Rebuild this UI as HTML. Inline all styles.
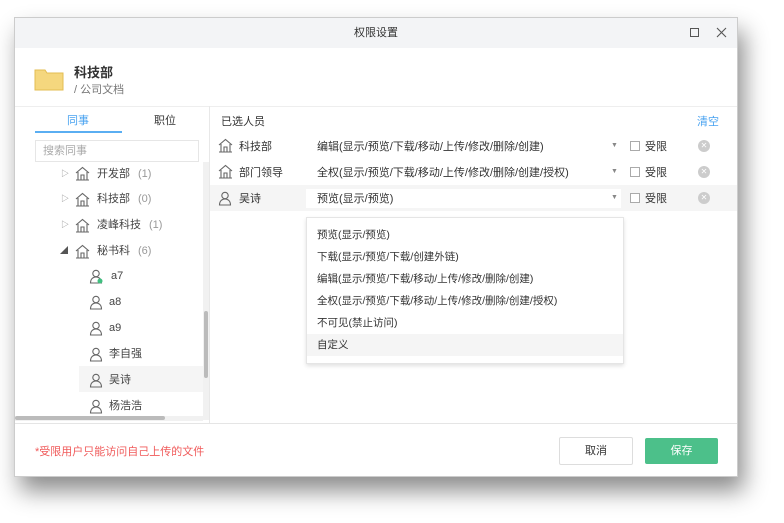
<!DOCTYPE html>
<html><head><meta charset="utf-8"><style>
*{box-sizing:border-box;margin:0;padding:0}
body{width:784px;height:523px;background:#fff;font-family:"Liberation Sans","Noto Sans CJK SC",sans-serif;font-size:11px;color:#333;position:relative;overflow:hidden}
.dlg{position:absolute;left:14px;top:17px;width:724px;height:460px;background:#fff;box-shadow:6px 14px 22px rgba(0,0,0,.45);border:1px solid #ccc}
.abs{position:absolute}
.title{left:0;top:0;width:100%;height:30px;background:#f3f4f6;text-align:center;line-height:30px;font-size:11px;color:#333}
.tree div.it{position:absolute;height:26px;line-height:26px;font-size:11px;color:#444}
.cnt{color:#999;margin-left:8px}
.dd div{height:22px;line-height:22px;padding-left:10px;font-size:10.5px;color:#333}
.arr{position:absolute;left:596px;font-size:7px;color:#888}
</style></head><body>
<div class="dlg">
 <div class="abs title">权限设置</div>
 <div class="abs" style="left:675px;top:10px;width:9px;height:9px;border:1px solid #555"></div>
 <svg class="abs" style="left:701px;top:9px" width="11" height="11"><path d="M1 1l9 9M10 1l-9 9" stroke="#555" stroke-width="1.1"/></svg>
 <svg class="abs" style="left:19px;top:49px" width="30" height="24" viewBox="0 0 30 24"><path d="M1 3h10l2 3h16v17H1z" fill="#f5d77e" stroke="#e3bc52"/></svg>
 <div class="abs" style="left:59px;top:44px;font-size:13px;font-weight:bold;color:#333">科技部</div>
 <div class="abs" style="left:59px;top:63px;font-size:11px;color:#777">/ 公司文档</div>
 <div class="abs" style="left:0;top:88px;width:722px;height:1px;background:#eee"></div>
 <div class="abs" style="left:52px;top:94px;color:#4aa3f0;font-size:11px">同事</div>
 <div class="abs" style="left:139px;top:94px;color:#333;font-size:11px">职位</div>
 <div class="abs" style="left:20px;top:113px;width:87px;height:2px;background:#5aaef2"></div>
 <div class="abs" style="left:20px;top:122px;width:164px;height:22px;border:1px solid #e6e6e6;color:#aaa;line-height:20px;padding-left:7px">搜索同事</div>
 <div class="abs" style="left:194px;top:88px;width:1px;height:317px;background:#e8e8e8"></div>
 <div class="abs" style="left:188px;top:144px;width:6px;height:258px;background:#f1f1f1"></div>
 <div class="abs" style="left:189px;top:293px;width:4px;height:67px;background:#bbb;border-radius:2px"></div>
 <div class="abs" style="left:0;top:398px;width:188px;height:5px;background:#f1f1f1"></div>
 <div class="abs" style="left:0;top:398px;width:150px;height:4px;background:#bbb;border-radius:2px"></div>
 <div class="abs" style="left:64px;top:348px;width:124px;height:26px;background:#f5f5f5"></div>
 <div class="tree">
  <svg width="0" height="0" style="position:absolute"><defs>
   <g id="h"><path d="M1 7L7.5 1.5 14 7M3 6v8h9V6M1 14h13M6 14V9h3v5" fill="none" stroke="#666" stroke-width="1.1"/></g>
   <g id="p"><circle cx="7" cy="4.5" r="3.2" fill="none" stroke="#666" stroke-width="1.1"/><path d="M1.5 14c0-4 2.5-6 5.5-6s5.5 2 5.5 6z" fill="none" stroke="#666" stroke-width="1.1"/></g>
  </defs></svg>
  <div class="it" style="left:46px;top:143px;color:#888;font-size:8px">▷</div>
  <svg class="abs" style="left:60px;top:148px" width="15" height="15"><use href="#h"/></svg>
  <div class="it" style="left:82px;top:143px">开发部<span class="cnt">(1)</span></div>
  <div class="it" style="left:46px;top:168px;color:#888;font-size:8px">▷</div>
  <svg class="abs" style="left:60px;top:174px" width="15" height="15"><use href="#h"/></svg>
  <div class="it" style="left:82px;top:168px">科技部<span class="cnt">(0)</span></div>
  <div class="it" style="left:46px;top:194px;color:#888;font-size:8px">▷</div>
  <svg class="abs" style="left:60px;top:200px" width="15" height="15"><use href="#h"/></svg>
  <div class="it" style="left:82px;top:194px">凌峰科技<span class="cnt">(1)</span></div>
  <div class="it" style="left:45px;top:220px;color:#555;font-size:8px">◢</div>
  <svg class="abs" style="left:60px;top:226px" width="15" height="15"><use href="#h"/></svg>
  <div class="it" style="left:82px;top:220px">秘书科<span class="cnt">(6)</span></div>
  <svg class="abs" style="left:74px;top:251px" width="14" height="15"><use href="#p"/><circle cx="11" cy="12" r="2.5" fill="#3fbf7f"/></svg>
  <div class="it" style="left:96px;top:245px">a7</div>
  <svg class="abs" style="left:74px;top:277px" width="14" height="15"><use href="#p"/></svg>
  <div class="it" style="left:94px;top:271px">a8</div>
  <svg class="abs" style="left:74px;top:303px" width="14" height="15"><use href="#p"/></svg>
  <div class="it" style="left:94px;top:297px">a9</div>
  <svg class="abs" style="left:74px;top:329px" width="14" height="15"><use href="#p"/></svg>
  <div class="it" style="left:94px;top:323px">李自强</div>
  <svg class="abs" style="left:74px;top:355px" width="14" height="15"><use href="#p"/></svg>
  <div class="it" style="left:94px;top:349px">吴诗</div>
  <svg class="abs" style="left:74px;top:381px" width="14" height="15"><use href="#p"/></svg>
  <div class="it" style="left:94px;top:375px">杨浩浩</div>
 </div>
 <div class="abs" style="left:206px;top:95px">已选人员</div>
 <div class="abs" style="left:682px;top:95px;color:#4aa3f0">清空</div>
 <div class="abs" style="left:195px;top:167px;width:527px;height:26px;background:#f5f5f5"></div>
 <svg class="abs" style="left:203px;top:120px" width="15" height="15"><use href="#h"/></svg>
 <div class="abs" style="left:224px;top:120px">科技部</div>
 <div class="abs" style="left:302px;top:120px">编辑(显示/预览/下载/移动/上传/修改/删除/创建)</div>
 <svg class="abs" style="left:203px;top:146px" width="15" height="15"><use href="#h"/></svg>
 <div class="abs" style="left:224px;top:146px">部门领导</div>
 <div class="abs" style="left:302px;top:146px">全权(显示/预览/下载/移动/上传/修改/删除/创建/授权)</div>
 <svg class="abs" style="left:203px;top:173px" width="14" height="15"><use href="#p"/></svg>
 <div class="abs" style="left:224px;top:172px">吴诗</div>
 <div class="abs" style="left:291px;top:171px;width:315px;height:19px;background:#fff"></div>
 <div class="abs" style="left:302px;top:172px">预览(显示/预览)</div>
 <div class="arr" style="top:124px">▼</div>
 <div class="arr" style="top:150px">▼</div>
 <div class="arr" style="top:176px">▼</div>
 <div class="abs" style="left:615px;top:123px;width:10px;height:10px;border:1px solid #aaa;background:#fff"></div>
 <div class="abs" style="left:630px;top:120px">受限</div>
 <div class="abs" style="left:615px;top:149px;width:10px;height:10px;border:1px solid #aaa;background:#fff"></div>
 <div class="abs" style="left:630px;top:146px">受限</div>
 <div class="abs" style="left:615px;top:175px;width:10px;height:10px;border:1px solid #aaa;background:#fff"></div>
 <div class="abs" style="left:630px;top:172px">受限</div>
 <div class="abs" style="left:683px;top:122px;width:12px;height:12px;border-radius:50%;background:#ccc;color:#fff;font-size:8px;text-align:center;line-height:12px">✕</div>
 <div class="abs" style="left:683px;top:148px;width:12px;height:12px;border-radius:50%;background:#ccc;color:#fff;font-size:8px;text-align:center;line-height:12px">✕</div>
 <div class="abs" style="left:683px;top:174px;width:12px;height:12px;border-radius:50%;background:#ccc;color:#fff;font-size:8px;text-align:center;line-height:12px">✕</div>
 <div class="abs dd" style="left:291px;top:199px;width:318px;height:147px;background:#fff;border:1px solid #e5e5e5;box-shadow:0 2px 4px rgba(0,0,0,.12);padding-top:6px">
  <div>预览(显示/预览)</div>
  <div>下载(显示/预览/下载/创建外链)</div>
  <div>编辑(显示/预览/下载/移动/上传/修改/删除/创建)</div>
  <div>全权(显示/预览/下载/移动/上传/修改/删除/创建/授权)</div>
  <div>不可见(禁止访问)</div>
  <div style="background:#f5f5f5">自定义</div>
 </div>
 <div class="abs" style="left:0;top:405px;width:722px;height:1px;background:#e5e5e5"></div>
 <div class="abs" style="left:20px;top:425px;color:#f05a5a">*受限用户只能访问自己上传的文件</div>
 <div class="abs" style="left:544px;top:419px;width:74px;height:28px;border:1px solid #ddd;border-radius:2px;text-align:center;line-height:26px">取消</div>
 <div class="abs" style="left:630px;top:420px;width:73px;height:26px;background:#4cc08a;border-radius:2px;color:#fff;text-align:center;line-height:26px">保存</div>
</div>
</body></html>
